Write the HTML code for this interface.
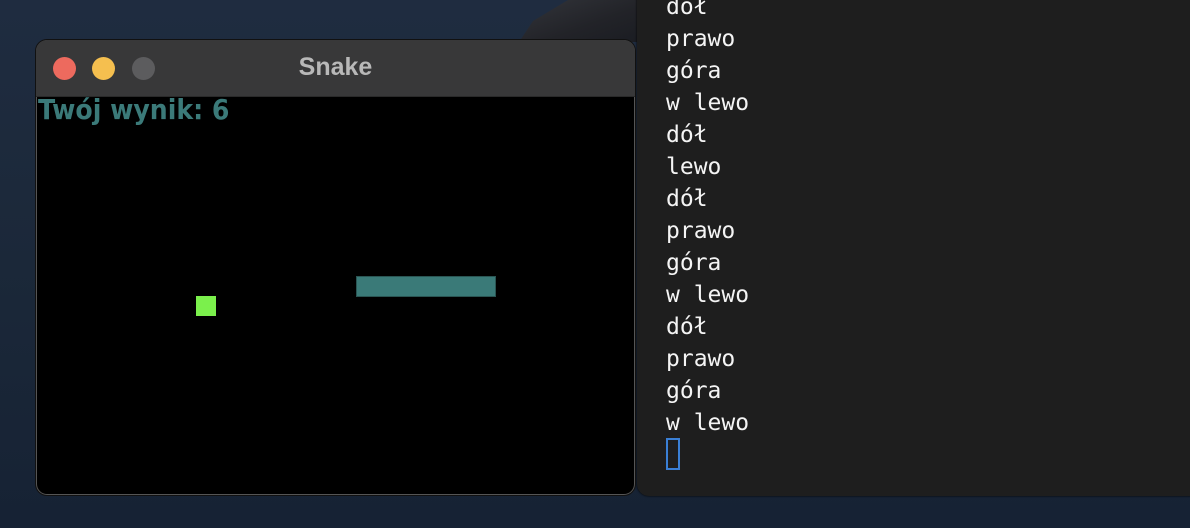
<!DOCTYPE html>
<html><head><meta charset="utf-8"><style>
html,body{margin:0;padding:0;width:1190px;height:528px;overflow:hidden}
body{position:relative;background:linear-gradient(180deg,#1f2c40 0%,#1b2839 50%,#162234 100%)}
.rock{position:absolute;left:505px;top:0;width:140px;height:42px;background:linear-gradient(160deg,#34363c 0%,#222328 60%,#1a1c22 100%);clip-path:polygon(10% 100%,20% 50%,35% 20%,45% 0,100% 0,100% 100%)}
.term{position:absolute;left:637px;top:-20px;width:560px;height:516px;background:#1e1e1e;border-radius:0 0 0 12px;box-shadow:0 0 2px #000}
.term pre{position:absolute;left:29px;top:11px;margin:0;font-family:"DejaVu Sans Mono","Liberation Mono",monospace;font-size:23px;line-height:32px;color:#f4f4f4}
.cursor{position:absolute;left:666px;top:438px;width:10px;height:28px;border:2px solid #3a7fd5}
.win{position:absolute;left:36px;top:40px;width:599px;height:455px;border-radius:11px;background:#000;overflow:hidden;box-shadow:0 0 0 1px #555 inset,0 0 0 1px #111}
.tb{position:absolute;left:0;top:0;width:100%;height:56px;background:#383839;border-bottom:1px solid #2a2a2a}
.dot{position:absolute;top:17px;width:23px;height:23px;border-radius:50%}
.title{position:absolute;left:0;width:100%;top:13px;text-align:center;font-family:"Liberation Sans",sans-serif;font-weight:bold;font-size:25px;color:#b8b8b8}
.score{position:absolute;left:2px;top:53px;font-family:"DejaVu Sans Condensed","DejaVu Sans",sans-serif;font-stretch:condensed;font-weight:bold;font-size:28px;color:#3b7a79}
</style></head><body>
<div class="rock"></div>
<div class="term"><pre>dół
prawo
góra
w lewo
dół
lewo
dół
prawo
góra
w lewo
dół
prawo
góra
w lewo</pre></div>
<div class="cursor"></div>
<div class="win">
<div class="tb">
<div class="dot" style="left:17px;background:#ed6a5e"></div>
<div class="dot" style="left:56px;background:#f5bf4f"></div>
<div class="dot" style="left:96px;background:#5c5c5e"></div>
<div class="title">Snake</div>
</div>
<div class="score">Twój wynik: 6</div>
<div style="position:absolute;left:160px;top:256px;width:20px;height:20px;background:#7bf04c"></div>
<div style="position:absolute;left:320px;top:236px;width:138px;height:19px;background:#3a7a78;border:1px solid #2a5553"></div>
</div>
</body></html>
